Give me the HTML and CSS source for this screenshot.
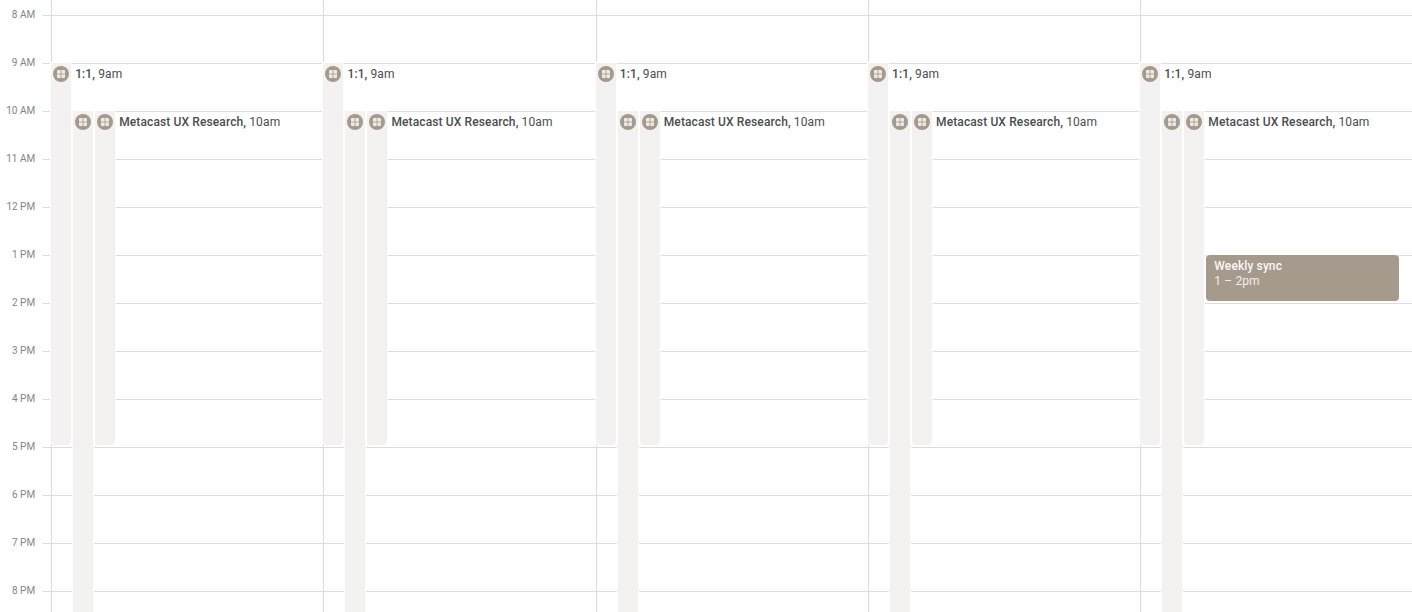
FILE: index.html
```html
<!DOCTYPE html>
<html lang="en">
<head>
<meta charset="utf-8">
<title>Calendar week</title>
<link rel="stylesheet" href="styles.css">
</head>
<body>
<svg class="defs" width="0" height="0" aria-hidden="true">
  <symbol id="room" viewBox="0 0 16 16">
    <circle cx="8" cy="8" r="8" fill="#a59a8b"/>
    <rect x="4" y="4" width="8" height="8" rx="1" fill="#fff" fill-opacity=".8"/>
    <path d="M8 4v8M4 8h8" fill="none" stroke="#a59a8b" stroke-width=".8"/>
  </symbol>
</svg>
<main class="calendar">
  <div class="gutter">
    <div class="hour"><span class="label">8 AM</span></div>
    <div class="hour"><span class="label">9 AM</span></div>
    <div class="hour"><span class="label">10 AM</span></div>
    <div class="hour"><span class="label">11 AM</span></div>
    <div class="hour"><span class="label">12 PM</span></div>
    <div class="hour"><span class="label">1 PM</span></div>
    <div class="hour"><span class="label">2 PM</span></div>
    <div class="hour"><span class="label">3 PM</span></div>
    <div class="hour"><span class="label">4 PM</span></div>
    <div class="hour"><span class="label">5 PM</span></div>
    <div class="hour"><span class="label">6 PM</span></div>
    <div class="hour"><span class="label">7 PM</span></div>
    <div class="hour"><span class="label">8 PM</span></div>
    <div class="hour"></div>
  </div>
  <div class="days">
    <section class="day">
      <div class="event ooo first"><svg class="icon"><use href="#room"/></svg><span class="text"><b>1:1,</b> 9am</span></div>
      <div class="event ooo second"><svg class="icon"><use href="#room"/></svg></div>
      <div class="event ooo third"><svg class="icon"><use href="#room"/></svg><span class="text"><b>Metacast UX Research,</b> 10am</span></div>
    </section>
    <section class="day">
      <div class="event ooo first"><svg class="icon"><use href="#room"/></svg><span class="text"><b>1:1,</b> 9am</span></div>
      <div class="event ooo second"><svg class="icon"><use href="#room"/></svg></div>
      <div class="event ooo third"><svg class="icon"><use href="#room"/></svg><span class="text"><b>Metacast UX Research,</b> 10am</span></div>
    </section>
    <section class="day">
      <div class="event ooo first"><svg class="icon"><use href="#room"/></svg><span class="text"><b>1:1,</b> 9am</span></div>
      <div class="event ooo second"><svg class="icon"><use href="#room"/></svg></div>
      <div class="event ooo third"><svg class="icon"><use href="#room"/></svg><span class="text"><b>Metacast UX Research,</b> 10am</span></div>
    </section>
    <section class="day">
      <div class="event ooo first"><svg class="icon"><use href="#room"/></svg><span class="text"><b>1:1,</b> 9am</span></div>
      <div class="event ooo second"><svg class="icon"><use href="#room"/></svg></div>
      <div class="event ooo third"><svg class="icon"><use href="#room"/></svg><span class="text"><b>Metacast UX Research,</b> 10am</span></div>
    </section>
    <section class="day">
      <div class="event ooo first"><svg class="icon"><use href="#room"/></svg><span class="text"><b>1:1,</b> 9am</span></div>
      <div class="event ooo second"><svg class="icon"><use href="#room"/></svg></div>
      <div class="event ooo third"><svg class="icon"><use href="#room"/></svg><span class="text"><b>Metacast UX Research,</b> 10am</span></div>
      <div class="event sync"><div class="sync-title">Weekly sync</div><div class="sync-time">1 – 2pm</div></div>
    </section>
  </div>
</main>
</body>
</html>
```
FILE: styles.css
```css
html, body {
  margin: 0;
  height: 612px;
  overflow: hidden;
  background: #fff;
}
.defs { position: absolute; }
.calendar {
  display: flex;
  height: 644px;
  margin-top: -32px;
  font-family: Roboto, "Liberation Sans", sans-serif;
}
.gutter {
  flex: 0 0 51.15px;
  display: flex;
  flex-direction: column;
}
.hour {
  flex: 0 0 48px;
  box-sizing: border-box;
  position: relative;
}
.hour::after {
  content: "";
  position: absolute;
  left: 43px;
  right: 0;
  bottom: 0;
  height: 1px;
  background: #dadce0;
}
.label {
  position: absolute;
  right: 16px;
  bottom: -5px;
  font-size: 10px;
  line-height: 12px;
  color: #80858a;
}
.days {
  flex: 1;
  display: flex;
  min-width: 0;
}
.day {
  flex: 0 0 272.3px;
  position: relative;
  box-sizing: border-box;
  border-left: 1px solid #dadce0;
  background: repeating-linear-gradient(to bottom, transparent 0 47px, #dadce0 47px 48px);
}
.event { position: absolute; box-sizing: border-box; }
.ooo {
  width: 20px;
  background: #f3f2f0;
  box-shadow: 0 0 0 1px #fff;
  border-radius: 0 0 4px 4px;
  padding: 3px 2px;
}
.first { left: -1px; top: 95px; height: 382px; }
.second { left: 21px; top: 143px; height: 520px; }
.third { left: 43px; top: 143px; height: 334px; }
.icon {
  display: block;
  width: 16px;
  height: 16px;
}
.text {
  position: absolute;
  left: 24px;
  top: 4px;
  white-space: nowrap;
  font-size: 12px;
  line-height: 15px;
  letter-spacing: .12px;
  color: #4a4d50;
}
.text b { font-weight: 500; }
.sync {
  left: 65px;
  top: 287px;
  width: 193px;
  height: 46px;
  border-radius: 4px;
  background: #a59a8b;
  box-shadow: 0 0 0 1px #fff;
  padding: 4px 8px;
  font-size: 12px;
  line-height: 15px;
  letter-spacing: .12px;
  color: #fff;
}
.sync-title { font-weight: 500; opacity: .95; }
.sync-time { opacity: .85; }
```
